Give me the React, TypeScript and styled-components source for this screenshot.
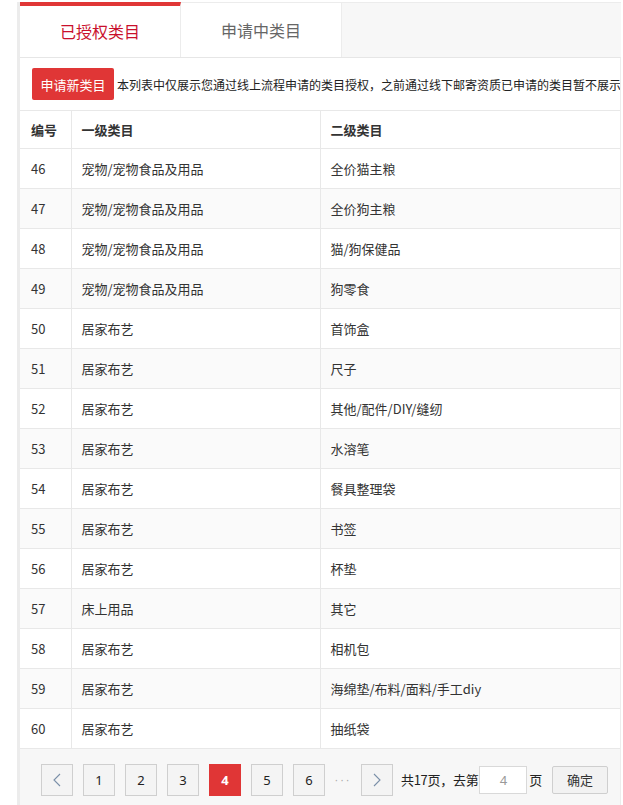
import React from 'react'
import styled, { createGlobalStyle } from 'styled-components'

const GlobalStyle = createGlobalStyle`
  body {
    margin: 0;
    background: #fff;
    font-family: 'Noto Sans CJK SC', 'Noto Sans', sans-serif;
    color: #333;
  }
`
const Wrapper = styled.div`
  margin: 2px 2px 0 17px;
  border-left: 3px solid #ececec;
`
const TabBar = styled.div`
  display: flex;
  height: 55px;
  background: #f7f7f7;
  border-top: 1px solid #ececec;
  box-sizing: border-box;
`
const Tab = styled.div<{ $active?: boolean }>`
  width: 161px;
  box-sizing: border-box;
  display: flex;
  align-items: center;
  justify-content: center;
  background: #fff;
  border-right: 1px solid #ececec;
  border-top: ${({ $active }) => ($active ? '4px solid #e03636' : '0')};
  margin-top: ${({ $active }) => ($active ? '-1px' : '0')};
  padding-bottom: ${({ $active }) => ($active ? '2px' : '0')};
  font-size: 16px;
  color: ${({ $active }) => ($active ? '#c9102c' : '#666')};
`
const Panel = styled.div`
  border-top: 1px solid #e6e6e6;
  border-right: 1px solid #ececec;
`
const Toolbar = styled.div`
  display: flex;
  align-items: center;
  gap: 3px;
  padding: 10px 0 10px 12px;
  border-bottom: 1px solid #e8e8e8;
  overflow: hidden;
`
const RedButton = styled.button`
  flex-shrink: 0;
  height: 32px;
  width: 82px;
  padding: 0;
  border: 0;
  border-radius: 2px;
  background: #e03636;
  color: #fff;
  font-family: inherit;
  font-size: 13px;
`
const Notice = styled.span`
  font-size: 12px;
  color: #222;
  white-space: nowrap;
`
const Table = styled.table`
  width: 100%;
  border-collapse: collapse;
  table-layout: fixed;
  font-size: 13px;
`
const Th = styled.th<{ $w?: number }>`
  box-sizing: border-box;
  width: ${({ $w }) => ($w ? `${$w}px` : 'auto')};
  height: 37px;
  padding: 0 10px;
  text-align: left;
  font-weight: 700;
  color: #333;
  border-bottom: 1px solid #e8e8e8;
  border-right: 1px solid #e8e8e8;
  &:first-child {
    padding-left: 11px;
  }
  &:last-child {
    border-right: 0;
  }
`
const Row = styled.tr<{ $striped: boolean }>`
  background: ${({ $striped }) => ($striped ? '#fafafa' : '#fff')};
`
const Td = styled.td`
  height: 39px;
  padding: 0 10px;
  color: #333;
  border-bottom: 1px solid #e8e8e8;
  border-right: 1px solid #e8e8e8;
  &:first-child {
    padding-left: 11px;
  }
  &:last-child {
    border-right: 0;
  }
`
const Pager = styled.div`
  height: 56px;
  box-sizing: border-box;
  padding: 15px 0 0 21px;
  background: #f7f7f7;
  font-size: 13px;
`
const PagerRow = styled.div`
  display: flex;
  align-items: center;
  height: 32px;
`
const PageButton = styled.div<{ $active?: boolean; $gap?: number }>`
  flex-shrink: 0;
  width: 32px;
  height: 32px;
  box-sizing: border-box;
  margin-right: ${({ $gap }) => ($gap ?? 10)}px;
  display: flex;
  align-items: center;
  justify-content: center;
  border: 1px solid ${({ $active }) => ($active ? '#e03636' : '#cfcfcf')};
  background: ${({ $active }) => ($active ? '#e03636' : '#f4f4f4')};
  color: ${({ $active }) => ($active ? '#fff' : '#222')};
  font-family: 'Noto Sans', sans-serif;
  font-weight: ${({ $active }) => ($active ? 700 : 400)};
  font-size: 13px;
`
const Ellipsis = styled.span`
  flex-shrink: 0;
  width: 26px;
  overflow: hidden;
  color: #aaa;
  font-family: 'Noto Sans', sans-serif;
  font-size: 10px;
  letter-spacing: 3px;
  white-space: nowrap;
`
const PagerText = styled.span`
  color: #222;
  white-space: nowrap;
  letter-spacing: -0.3px;
`
const PageInput = styled.input`
  flex-shrink: 0;
  width: 48px;
  height: 28px;
  box-sizing: border-box;
  margin: 0 2px 0 1px;
  border: 1px solid #d9d9d9;
  background: #fff;
  text-align: center;
  color: #999;
  font-family: 'Noto Sans', sans-serif;
  font-size: 13px;
  outline: none;
`
const ConfirmButton = styled.button`
  flex-shrink: 0;
  width: 56px;
  height: 28px;
  margin-left: 10px;
  padding: 0;
  border: 1px solid #cfcfcf;
  border-radius: 2px;
  background: #f2f2f2;
  color: #333;
  font-family: inherit;
  font-size: 13px;
`

const Chevron = ({ dir }: { dir: 'left' | 'right' }) => (
  <svg width="8" height="14" viewBox="0 0 8 14">
    <path
      d={dir === 'left' ? 'M7 1 L1 7 L7 13' : 'M1 1 L7 7 L1 13'}
      fill="none"
      stroke="#7a8fa8"
      strokeWidth="1.1"
    />
  </svg>
)

const rows: [number, string, string][] = [
  [46, '宠物/宠物食品及用品', '全价猫主粮'],
  [47, '宠物/宠物食品及用品', '全价狗主粮'],
  [48, '宠物/宠物食品及用品', '猫/狗保健品'],
  [49, '宠物/宠物食品及用品', '狗零食'],
  [50, '居家布艺', '首饰盒'],
  [51, '居家布艺', '尺子'],
  [52, '居家布艺', '其他/配件/DIY/缝纫'],
  [53, '居家布艺', '水溶笔'],
  [54, '居家布艺', '餐具整理袋'],
  [55, '居家布艺', '书签'],
  [56, '居家布艺', '杯垫'],
  [57, '床上用品', '其它'],
  [58, '居家布艺', '相机包'],
  [59, '居家布艺', '海绵垫/布料/面料/手工diy'],
  [60, '居家布艺', '抽纸袋'],
]

const App = (): JSX.Element => (
  <>
    <GlobalStyle />
    <Wrapper>
      <TabBar>
        <Tab $active>已授权类目</Tab>
        <Tab>申请中类目</Tab>
      </TabBar>
      <Panel>
        <Toolbar>
          <RedButton>申请新类目</RedButton>
          <Notice>
            本列表中仅展示您通过线上流程申请的类目授权，之前通过线下邮寄资质已申请的类目暂不展示
          </Notice>
        </Toolbar>
        <Table>
          <thead>
            <tr>
              <Th $w={51}>编号</Th>
              <Th $w={249}>一级类目</Th>
              <Th>二级类目</Th>
            </tr>
          </thead>
          <tbody>
            {rows.map(([id, first, second]) => (
              <Row key={id} $striped={id % 2 === 1}>
                <Td>{id}</Td>
                <Td>{first}</Td>
                <Td>{second}</Td>
              </Row>
            ))}
          </tbody>
        </Table>
        <Pager>
          <PagerRow>
            <PageButton>
              <Chevron dir="left" />
            </PageButton>
            {[1, 2, 3, 4, 5, 6].map(n => (
              <PageButton key={n} $active={n === 4}>
                {n}
              </PageButton>
            ))}
            <Ellipsis>···</Ellipsis>
            <PageButton $gap={8}>
              <Chevron dir="right" />
            </PageButton>
            <PagerText>共17页，去第</PagerText>
            <PageInput defaultValue="4" />
            <PagerText>页</PagerText>
            <ConfirmButton>确定</ConfirmButton>
          </PagerRow>
        </Pager>
      </Panel>
    </Wrapper>
  </>
)

export default App
